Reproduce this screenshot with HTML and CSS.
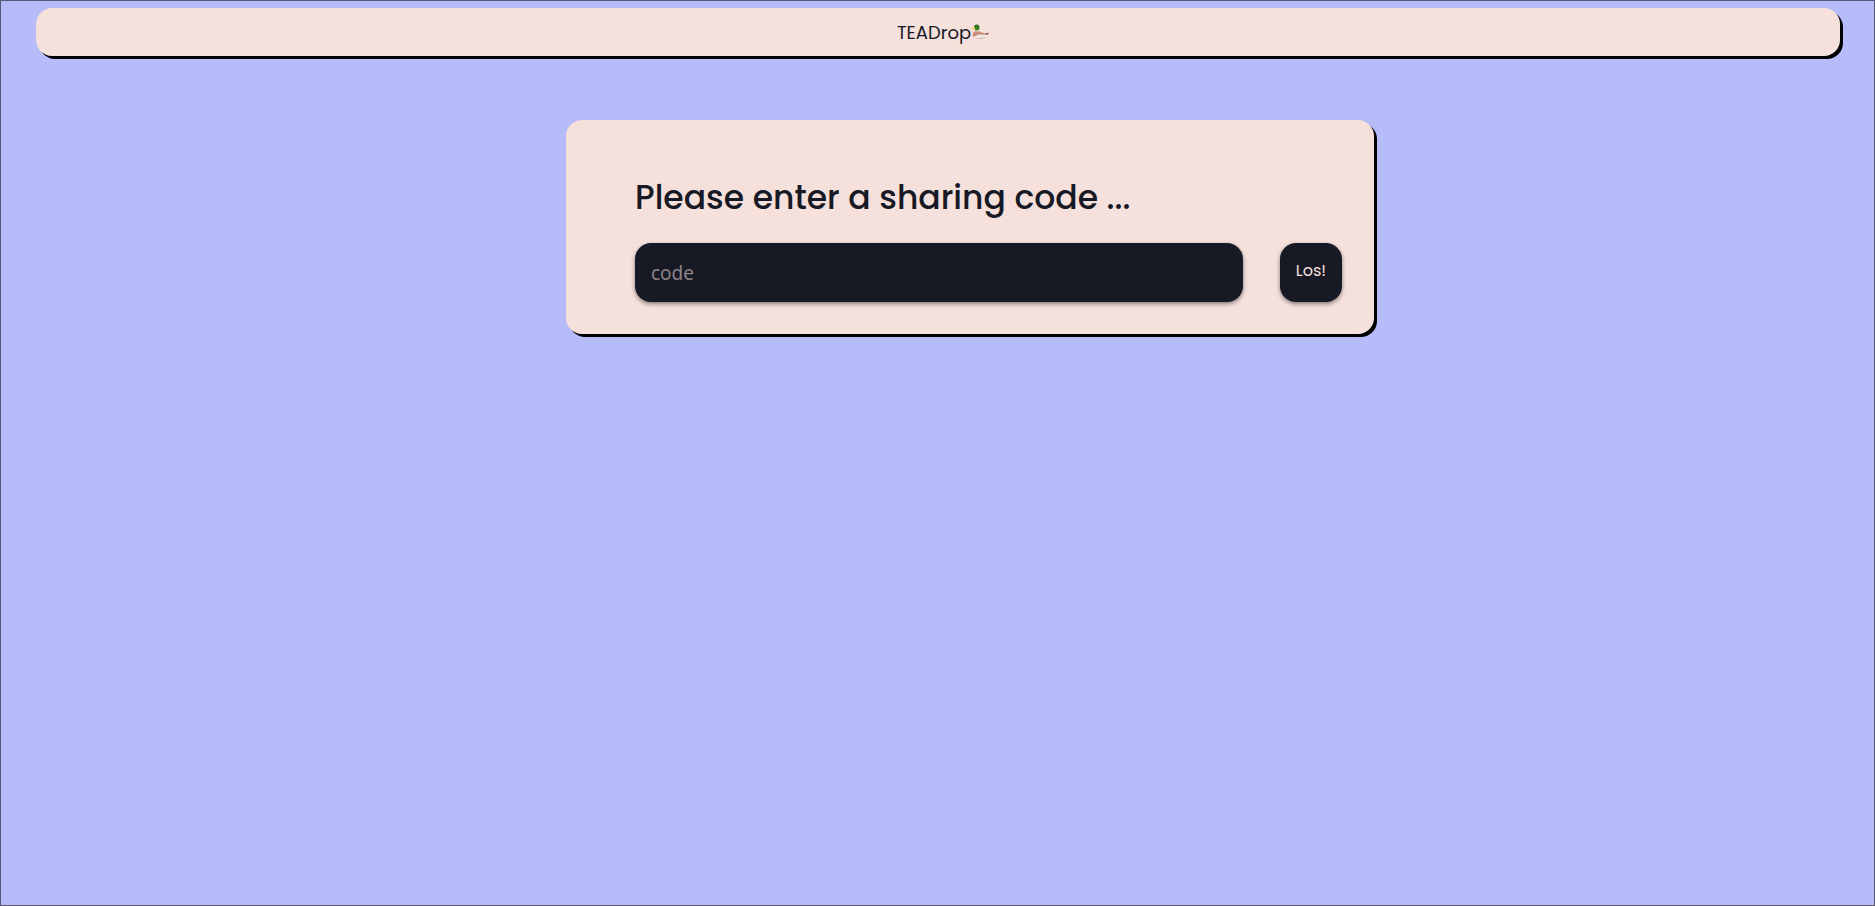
FILE: index.html
```html
<!DOCTYPE html>
<html lang="en">
<head>
<meta charset="utf-8">
<meta name="viewport" content="width=device-width, initial-scale=1">
<title>TEADrop</title>
<link rel="stylesheet" href="styles.css">
</head>
<body>
<header class="topbar">
  <span class="brand">TEADrop</span>
  <svg class="duck" viewBox="0 0 17 16" aria-hidden="true">
    <path fill="#eee9e5" d="M2.500 8.500C1.600 10.500 2 12.300 3.600 13.300c2 1.100 7.400 1 9.400.1 1.900-.9 2.500-2.700 3.800-4.200-1.800 0-3.300-.2-4.800-.5C9 8 5.500 6.500 2.500 8.500z"/>
    <path fill="#ca8f76" d="M3.600 6.800C1.400 8 1 10.800 2.600 12.400c1.200-.9 2.300-1.900 4.400-2.300 3-.5 5.500.4 8.300.1.500-.4.900-.8 1.200-1.300-2 .2-4.500-.3-6.600-1.200C7.500 6.700 5.500 6.100 3.600 6.800z"/>
    <path fill="#b9a79d" d="M4 12.800c2.800 1 7 .7 9.800-.7-1.500 2.300-7.500 2.900-9.800.7z"/>
    <path fill="#684e42" d="M13.400 8.700l3.500-.4-1.400 1.900z"/>
    <path fill="#eef0e8" d="M3.800 6.100l3.800-.8.100 1.200-4 .6z"/>
    <path fill="#377d22" d="M2.800 2.400C3.400-.1 7.500-.3 8 2.300c.3 1.400-.3 2.200-.3 3.200l-3.800.9c.4-1 .2-1.900-.5-2.400z"/>
    <path fill="#f4cf3f" d="M3.100 2.700C2.100 3.400 1.200 4.300.1 4.500c1 .9 3 .7 4-.3z"/>
    <circle cx="4.500" cy="2.500" r=".5" fill="#17202a"/>
  </svg>
</header>
<main class="content">
  <form class="card">
    <h1 class="title"><label for="code">Please enter a sharing code ...</label></h1>
    <div class="row">
      <input class="code" id="code" type="text" placeholder="code">
      <button class="go" type="button">Los!</button>
    </div>
  </form>
</main>
</body>
</html>
```
FILE: styles.css
```css
* {
  box-sizing: border-box;
}

body {
  min-height: 100vh;
  margin: 0;
  padding: 7px 34px 0 35px;
  border: 1px solid #5b5874;
  background: #b6bbf9;
  color: #171925;
  font-family: Poppins, Inter, sans-serif;
}

.topbar {
  display: flex;
  align-items: center;
  justify-content: center;
  height: 48px;
  padding-left: 10px;
  border-radius: 16px;
  background: #f5e0dc;
  box-shadow: 3px 3px 0 #000;
}

.brand {
  padding-top: 1px;
  font-size: 18px;
  line-height: 28px;
}

.duck {
  width: 18px;
  height: 17px;
}

.content {
  display: flex;
  justify-content: center;
  padding: 64px 0 0 64px;
}

.card {
  width: 100%;
  max-width: 808px;
  padding: 52px 32px 32px 69px;
  border-radius: 16px;
  background: #f5e0dc;
  box-shadow: 3px 3px 0 #000;
}

.title {
  margin: 0 0 19px;
  font-size: 33px;
  font-weight: 500;
  line-height: 52px;
}

.row {
  display: flex;
  gap: 37px;
}

.code,
.go {
  height: 59px;
  border: 0;
  border-radius: 16px;
  background: #171925;
  color: #f5e0dc;
  box-shadow: 0 2px 4px rgba(0, 0, 0, 0.45);
}

.code {
  flex: 1;
  min-width: 0;
  padding: 0 16px;
  font-family: "Noto Sans", sans-serif;
  font-size: 19px;
}

.code::placeholder {
  color: #8d8285;
}

.go {
  width: 62px;
  padding: 0 0 4px;
  font-family: inherit;
  font-size: 16px;
}
```
